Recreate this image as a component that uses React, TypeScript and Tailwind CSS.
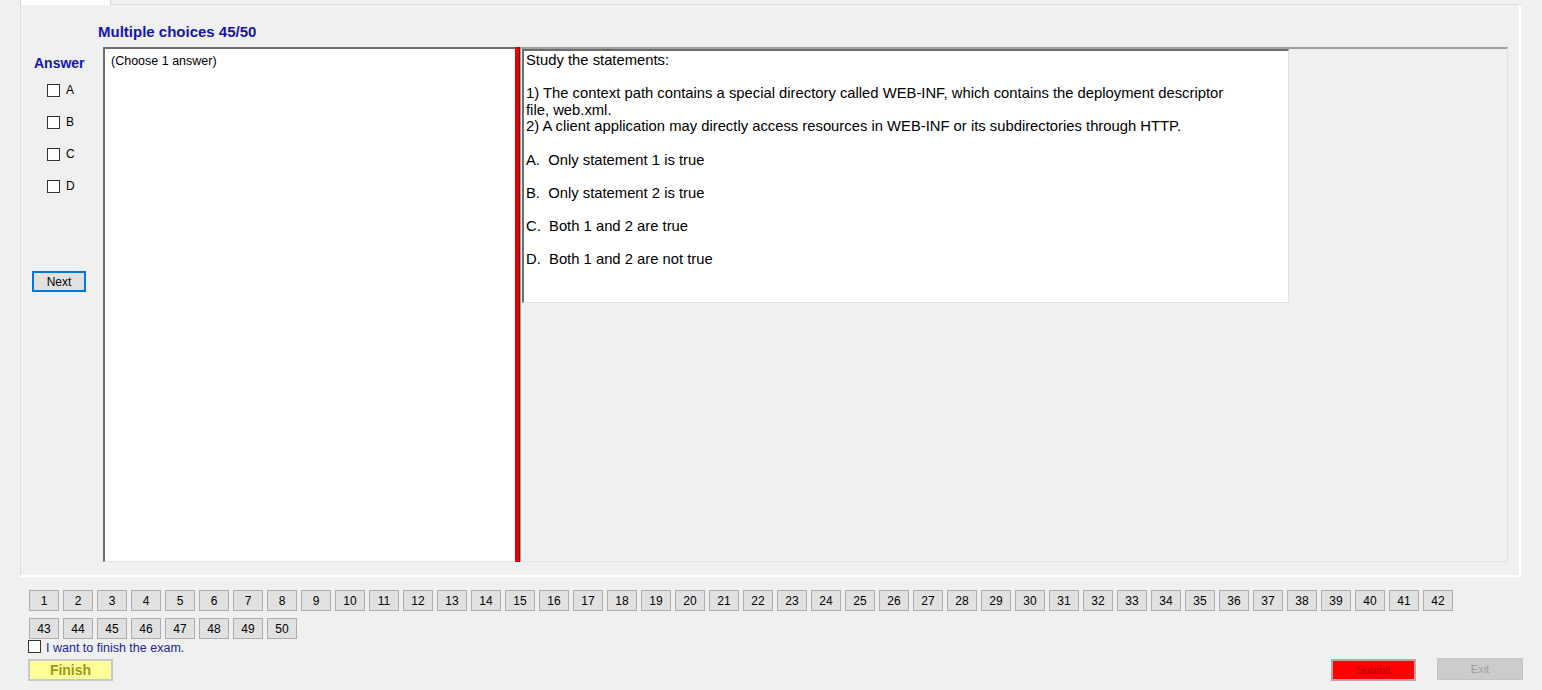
import React from "react";

const options = ["A", "B", "C", "D"];
const numbers = Array.from({ length: 50 }, (_, i) => i + 1);

const questionText = `Study the statements:

1) The context path contains a special directory called WEB-INF, which contains the deployment descriptor
file, web.xml.
2) A client application may directly access resources in WEB-INF or its subdirectories through HTTP.

A.  Only statement 1 is true

B.  Only statement 2 is true

C.  Both 1 and 2 are true

D.  Both 1 and 2 are not true`;

function NumButton({ n }: { n: number }) {
  return (
    <div className="w-[30px] h-[21px] bg-[#e1e1e1] border border-[#adadad] flex items-center justify-center text-[12px] text-black">
      {n}
    </div>
  );
}

export default function App() {
  return (
    <div
      className="w-full h-[690px] bg-[#f0f0f0] overflow-hidden"
      style={{ fontFamily: '"Liberation Sans", Arial, sans-serif' }}
    >
      {/* Tab strip */}
      <div className="flex h-[5px] pl-[20px] pr-[21px]">
        <div className="w-[91px] h-[5px] bg-white border-x border-[#d9d9d9]" />
        <div className="flex-1 border-b border-[#dcdcdc]" />
      </div>

      {/* Tab page */}
      <div className="ml-[20px] mr-[21px] h-[572px] border-l border-[#dcdcdc] border-r-2 border-b-2 border-r-white border-b-white bg-[#f0f0f0] flex flex-col">
        {/* Title */}
        <div className="h-[42px] pt-[15px] pl-[77px]">
          <span className="text-[15px] leading-[17px] font-bold text-[#1515b0]">Multiple choices 45/50</span>
        </div>

        <div className="flex h-[515px]">
          {/* Answer column */}
          <div className="w-[82px] flex flex-col">
            <div className="pl-[13px] pt-[8px] text-[14px] leading-[16px] font-bold text-[#1515b0]">Answer</div>
            <div className="flex flex-col gap-[19px] pl-[26px] pt-[13px]">
              {options.map((o) => (
                <div key={o} className="flex items-center h-[13px]">
                  <div className="w-[13px] h-[13px] border border-[#333333] bg-white" />
                  <span className="ml-[6px] text-[12px] leading-[13px] text-black">{o}</span>
                </div>
              ))}
            </div>
            <div className="pl-[11px] pt-[78px]">
              <div className="w-[54px] h-[21px] border-2 border-[#0078d7] bg-[#e1e1e1] flex items-center justify-center text-[12px] text-black">
                Next
              </div>
            </div>
          </div>

          {/* Left text box */}
          <div className="w-[412px] h-full bg-white border-l-2 border-t-2 border-[#6d6d6d] border-b border-b-[#e3e3e3] pl-[6px] pt-[5px] text-[12.5px] leading-[14px] text-black">
            (Choose 1 answer)
          </div>

          {/* Splitter */}
          <div className="w-[5px] h-full bg-[#e60000] border-r border-[#7a1010]" />

          {/* Right panel */}
          <div className="w-[988px] h-full border-t-2 border-[#a0a0a0] border-l border-l-[#a0a0a0] border-r border-r-[#e3e3e3] border-b border-b-[#e3e3e3] bg-[#f0f0f0] pl-[1px]">
            <div className="w-[767px] h-[254px] bg-white border-l-2 border-t-2 border-[#6d6d6d] border-r border-b border-r-[#e3e3e3] border-b-[#e3e3e3] pl-[2px] pt-[1px]">
              <div className="whitespace-pre text-[14.8px] leading-[16.6px] text-black">{questionText}</div>
            </div>
          </div>
        </div>
      </div>

      {/* Question number buttons */}
      <div className="pl-[29px] pt-[13px] flex flex-col gap-[7px]">
        <div className="flex gap-[4px]">
          {numbers.slice(0, 42).map((n) => (
            <NumButton key={n} n={n} />
          ))}
        </div>
        <div className="flex gap-[4px]">
          {numbers.slice(42).map((n) => (
            <NumButton key={n} n={n} />
          ))}
        </div>
      </div>

      {/* Finish confirmation */}
      <div className="pl-[28px] pt-[1px] flex items-start h-[15px]">
        <div className="w-[13px] h-[13px] border border-[#333333] bg-white" />
        <span className="ml-[5px] mt-[2px] text-[12.5px] leading-[13px] text-[#2222a0]">I want to finish the exam.</span>
      </div>

      {/* Bottom buttons */}
      <div className="flex items-start justify-between pl-[28px] pr-[19px] pt-[5px]">
        <div className="w-[85px] h-[22px] bg-[#ffff99] border-2 border-[#c8c8c8] flex items-center justify-center text-[14px] font-bold text-[#9a9a1a]">
          Finish
        </div>
        <div className="flex gap-[21px]">
          <div className="w-[85px] h-[22px] bg-[#ff0000] border-2 border-[#c0a0a0] flex items-center justify-center text-[11px] text-[#a80000]">
            Submit
          </div>
          <div className="w-[86px] h-[22px] bg-[#cccccc] border border-[#c4c4c4] flex items-center justify-center text-[11px] text-[#a0a0a0] -mt-[1px]">
            Exit
          </div>
        </div>
      </div>
    </div>
  );
}
